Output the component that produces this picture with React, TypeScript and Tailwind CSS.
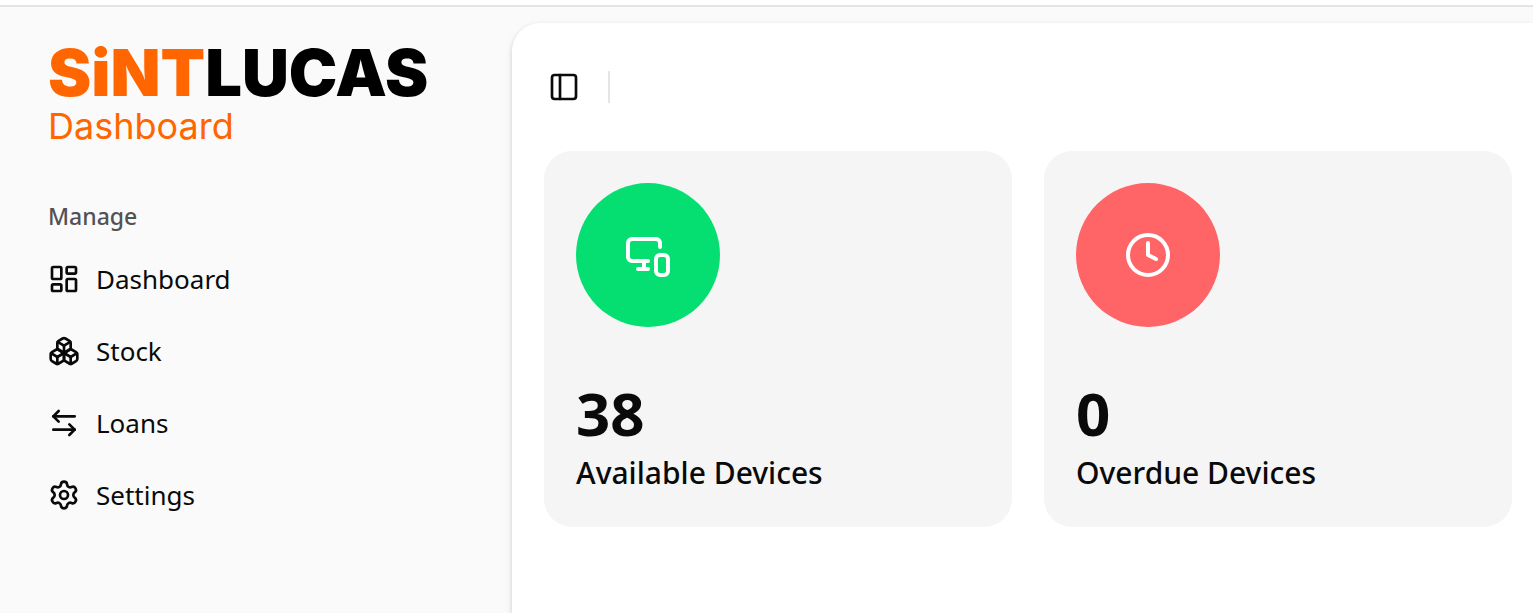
import {
  ArrowLeftRight,
  Boxes,
  Clock,
  LayoutDashboard,
  MonitorSmartphone,
  PanelLeft,
  Settings,
  type LucideIcon,
} from "lucide-react";

const navItems: { label: string; icon: LucideIcon }[] = [
  { label: "Dashboard", icon: LayoutDashboard },
  { label: "Stock", icon: Boxes },
  { label: "Loans", icon: ArrowLeftRight },
  { label: "Settings", icon: Settings },
];

const stats: { label: string; value: number; icon: LucideIcon; color: string }[] = [
  { label: "Available Devices", value: 38, icon: MonitorSmartphone, color: "bg-[#05df72]" },
  { label: "Overdue Devices", value: 0, icon: Clock, color: "bg-[#ff6467]" },
];

function Logo() {
  return (
    <a href="#" className="block font-['Inter',sans-serif] text-[#ff6600]">
      <span className="block text-[65px] leading-[62px] font-black">
        SiNT<span className="text-black">LUCAS</span>
      </span>
      <span className="block text-4xl leading-[44px] font-normal">Dashboard</span>
    </a>
  );
}

function Sidebar() {
  return (
    <aside className="w-[512px] shrink-0 px-12 pt-[35px]">
      <Logo />
      <h2 className="mt-[52px] text-[23px] leading-8 font-medium text-[#525252]">Manage</h2>
      <nav className="mt-[15px]">
        <ul className="flex flex-col gap-2">
          {navItems.map(({ label, icon: Icon }) => (
            <li key={label}>
              <a href="#" className="flex h-16 items-center gap-4 text-[26px] leading-8">
                <Icon size={32} />
                <span>{label}</span>
              </a>
            </li>
          ))}
        </ul>
      </nav>
    </aside>
  );
}

export default function App() {
  return (
    <div className="flex min-h-screen flex-col bg-[#fafafa] font-['Noto_Sans',sans-serif] text-[#0a0a0a]">
      <div className="h-[7px] border-b-2 border-[#e4e4e7] bg-white" />
      <div className="flex grow">
        <Sidebar />
        <main className="mt-4 min-w-0 grow rounded-tl-[28px] bg-white pr-[21px] pl-8 shadow-[0_2px_6px_rgba(0,0,0,0.1),0_2px_4px_rgba(0,0,0,0.1)]">
          <header className="flex h-32 items-center gap-7">
            <button type="button" aria-label="Toggle sidebar" className="ml-1">
              <PanelLeft size={32} />
            </button>
            <div className="h-8 w-0.5 bg-[#e5e5e5]" />
          </header>
          <div className="grid grid-cols-2 gap-8">
            {stats.map(({ label, value, icon: Icon, color }) => (
              <section key={label} className="rounded-[28px] bg-[#f5f5f5] p-8">
                <div className={`flex size-36 items-center justify-center rounded-full text-white ${color}`}>
                  <Icon size={48} />
                </div>
                <p className="mt-14 text-6xl leading-[60px] font-bold">{value}</p>
                <h3 className="mt-2 text-3xl leading-[44px] font-medium">{label}</h3>
              </section>
            ))}
          </div>
        </main>
      </div>
    </div>
  );
}
